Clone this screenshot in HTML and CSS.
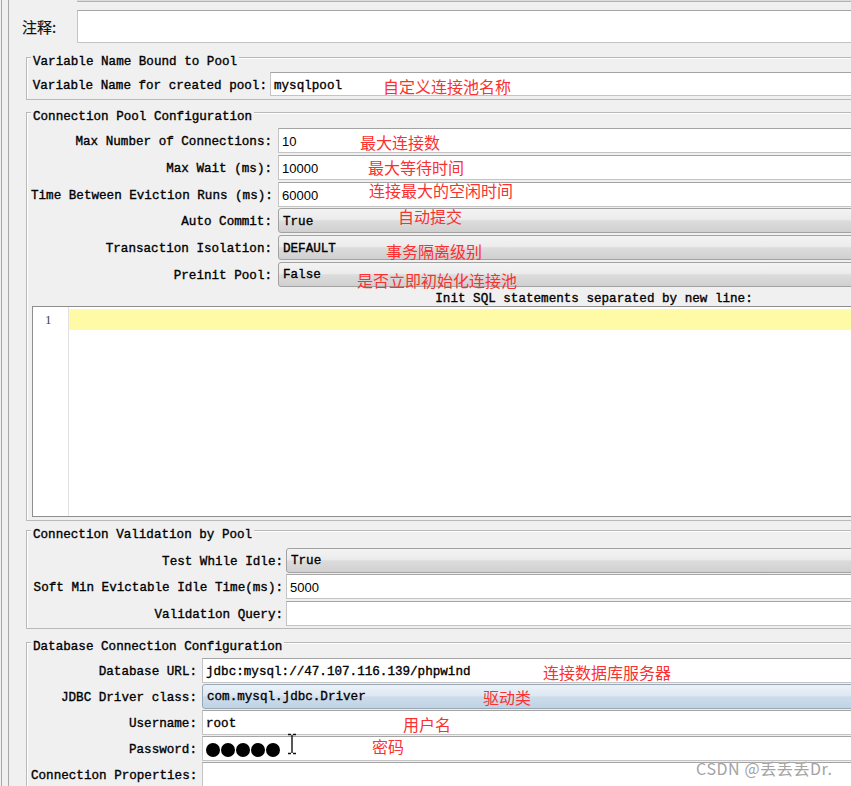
FILE: index.html
```html
<!DOCTYPE html>
<html>
<head>
<meta charset="utf-8">
<link rel="stylesheet" href="styles.css">
</head>
<body>
<div class="window">
  <div class="inner">
    <div class="prev-field"></div>
    <div class="comment-row">
      <span class="cn-label">注释:</span>
      <div class="field comment-field"></div>
    </div>

    <div class="group g1">
      <div class="group-title">Variable Name Bound to Pool</div>
      <div class="rows">
        <div class="row"><span class="lbl">Variable Name for created pool:</span><div class="field">mysqlpool</div></div>
      </div>
    </div>

    <div class="group g2">
      <div class="group-title">Connection Pool Configuration</div>
      <div class="rows">
        <div class="row"><span class="lbl">Max Number of Connections:</span><div class="field num">10</div></div>
        <div class="row"><span class="lbl">Max Wait (ms):</span><div class="field num">10000</div></div>
        <div class="row"><span class="lbl">Time Between Eviction Runs (ms):</span><div class="field num">60000</div></div>
        <div class="row"><span class="lbl">Auto Commit:</span><div class="combo">True</div></div>
        <div class="row"><span class="lbl">Transaction Isolation:</span><div class="combo">DEFAULT</div></div>
        <div class="row"><span class="lbl">Preinit Pool:</span><div class="combo">False</div></div>
      </div>
      <div class="init-label">Init SQL statements separated by new line:</div>
      <div class="editor">
        <div class="gutter"><div class="lineno">1</div></div>
        <div class="code"><div class="curline"></div></div>
      </div>
    </div>

    <div class="group g3">
      <div class="group-title">Connection Validation by Pool</div>
      <div class="rows">
        <div class="row"><span class="lbl">Test While Idle:</span><div class="combo">True</div></div>
        <div class="row"><span class="lbl">Soft Min Evictable Idle Time(ms):</span><div class="field num">5000</div></div>
        <div class="row"><span class="lbl">Validation Query:</span><div class="field"></div></div>
      </div>
    </div>

    <div class="group g4">
      <div class="group-title">Database Connection Configuration</div>
      <div class="rows">
        <div class="row"><span class="lbl">Database URL:</span><div class="field">jdbc:mysql://47.107.116.139/phpwind</div></div>
        <div class="row"><span class="lbl">JDBC Driver class:</span><div class="combo blue">com.mysql.jdbc.Driver</div></div>
        <div class="row"><span class="lbl">Username:</span><div class="field">root</div></div>
        <div class="row"><span class="lbl">Password:</span><div class="field"><span class="dots"><i class="dot"></i><i class="dot"></i><i class="dot"></i><i class="dot"></i><i class="dot"></i></span></div></div>
        <div class="row"><span class="lbl">Connection Properties:</span><div class="field"></div></div>
      </div>
    </div>
  </div>
</div>

<span class="note n1">自定义连接池名称</span>
<span class="note n2">最大连接数</span>
<span class="note n3">最大等待时间</span>
<span class="note n4">连接最大的空闲时间</span>
<span class="note n5">自动提交</span>
<span class="note n6">事务隔离级别</span>
<span class="note n7">是否立即初始化连接池</span>
<span class="note n8">连接数据库服务器</span>
<span class="note n9">驱动类</span>
<span class="note n10">用户名</span>
<span class="note n11">密码</span>

<svg class="ibeam" width="10" height="22" viewBox="0 0 10 22">
  <path d="M1 1.5h3M6 1.5h3M5 2v18M1 20.5h3M6 20.5h3" stroke="#111" stroke-width="1.4" fill="none"/>
</svg>

<span class="watermark">CSDN @丢丢丢Dr.</span>
</body>
</html>
```

FILE: styles.css
```css
html, body {
  margin: 0;
  padding: 0;
  overflow: hidden;
  background: #f0f0f0;
}
body {
  position: relative;
  width: 851px;
  height: 786px;
  font-family: "Liberation Mono", "DejaVu Sans Mono", monospace;
  font-size: 12.6px;
  color: #000;
  -webkit-text-stroke: 0.35px #000;
}
.window {
  margin-left: 1px;
  border-left: 1px solid #a9a9a9;
  width: 1160px;
  height: 786px;
}
.inner {
  margin-left: 6px;
  border-left: 1px solid #a9a9a9;
  padding-left: 17px;
  height: 100%;
}
.prev-field {
  margin-left: 51px;
  height: 1px;
  background: #dcdcdc;
  border-bottom: 1px solid #b3b3b3;
}
.comment-row {
  display: flex;
  align-items: center;
  margin: 8px 0 0 -4px;
}
.cn-label {
  width: 55px;
  font-family: "Noto Sans CJK SC", sans-serif;
  font-size: 15px;
  color: #111;
  -webkit-text-stroke: 0.2px #111;
}
.field {
  box-sizing: border-box;
  background: #fff;
  border: 1px solid #c4c4c4;
  border-top-color: #a4a4a4;
  display: flex;
  align-items: center;
  padding: 3px 0 0 3px;
  white-space: nowrap;
  height: 100%;
}
.comment-field {
  flex: 1;
  height: 33px;
}
.num {
  font-family: "Liberation Sans", Arial, sans-serif;
  font-size: 13px;
  -webkit-text-stroke: 0;
  padding-top: 2px;
}
.combo {
  box-sizing: border-box;
  height: 100%;
  border: 1px solid #a2a2a2;
  border-radius: 3px;
  background: linear-gradient(#f3f3f3 0%, #ececec 45%, #dcdcdc 52%, #d0d0d0 100%);
  display: flex;
  align-items: center;
  padding: 2px 0 0 4px;
  white-space: nowrap;
}
.combo.blue {
  background: linear-gradient(#eaf1f8 0%, #dfe9f3 45%, #cddcea 52%, #c0d3e5 100%);
  border-color: #9aa8b6;
}
.group {
  box-sizing: border-box;
  border: 1px solid #b9b9b9;
  box-shadow: inset 1px 1px 0 #fff;
  padding: 0 4px;
}
.group-title {
  width: fit-content;
  height: 14px;
  line-height: 14px;
  margin: -3px 0 -1px 0;
  padding: 0 2px;
  background: #f0f0f0;
  white-space: nowrap;
}
.rows {
  display: flex;
  flex-direction: column;
}
.row {
  display: grid;
  height: 25px;
  align-items: center;
}
.lbl {
  text-align: right;
  padding: 3px 4px 0 0;
  white-space: nowrap;
}
.g1 { margin-top: 14px; padding-bottom: 3px; }
.g1 .rows { margin-top: 4px; }
.g1 .row { grid-template-columns: 239px 1fr; height: 24px; }
.g1 .lbl { padding-right: 3px; }

.g2 { margin-top: 12px; padding-bottom: 3px; }
.g2 .rows { margin-top: 5px; gap: 1.8px; }
.g2 .row { grid-template-columns: 247px 1fr; }
.g2 .lbl { padding-right: 6px; }

.g3 { margin-top: 9px; padding-bottom: 2px; }
.g3 .rows { margin-top: 7px; gap: 1.3px; }
.g3 .row { grid-template-columns: 255px 1fr; }
.g3 .lbl { padding-right: 3px; }

.g4 { margin-top: 13px; }
.g4 .rows { margin-top: 5px; gap: 1.2px; }
.g4 .row { grid-template-columns: 171px 1fr; }
.g4 .lbl { padding-right: 5px; }

.init-label {
  text-align: center;
  line-height: 14px;
  height: 14px;
  margin-top: 4px;
  padding-top: 1px;
  box-sizing: border-box;
  white-space: nowrap;
}
.editor {
  box-sizing: border-box;
  margin: 1px 1px 0 1px;
  height: 211px;
  border: 1px solid #8e8e8e;
  background: #fff;
  display: flex;
}
.gutter {
  width: 35px;
  border-right: 1px solid #e2e2e2;
  padding-top: 2px;
}
.lineno {
  height: 21px;
  line-height: 21px;
  padding-left: 12px;
  font-family: "Liberation Serif", serif;
  font-size: 13px;
  color: #444;
  -webkit-text-stroke: 0;
}
.code {
  flex: 1;
  padding-top: 2px;
}
.curline {
  height: 21px;
  background: #fffaa6;
}
.dots {
  display: flex;
  gap: 1px;
}
.dot {
  display: block;
  width: 14px;
  height: 14px;
  border-radius: 50%;
  background: #000;
}
.note {
  position: absolute;
  font-family: "Noto Sans CJK SC", sans-serif;
  font-size: 16px;
  line-height: 20px;
  color: #fb3030;
  white-space: nowrap;
  -webkit-text-stroke: 0;
}
.n1 { left: 383px; top: 76px; }
.n2 { left: 360px; top: 132px; }
.n3 { left: 368px; top: 157px; }
.n4 { left: 369px; top: 180px; }
.n5 { left: 398px; top: 206px; }
.n6 { left: 386px; top: 241px; }
.n7 { left: 357px; top: 270px; }
.n8 { left: 543px; top: 662px; }
.n9 { left: 483px; top: 687px; }
.n10 { left: 403px; top: 714px; }
.n11 { left: 372px; top: 736px; }
.ibeam {
  position: absolute;
  left: 287px;
  top: 733px;
}
.watermark {
  position: absolute;
  left: 696px;
  top: 757px;
  font-family: "Noto Sans CJK SC", sans-serif;
  font-size: 16px;
  line-height: 22px;
  letter-spacing: 0.6px;
  color: #a3a3a3;
  text-shadow: 0 0 1px #fff;
  white-space: nowrap;
  -webkit-text-stroke: 0;
}
```
